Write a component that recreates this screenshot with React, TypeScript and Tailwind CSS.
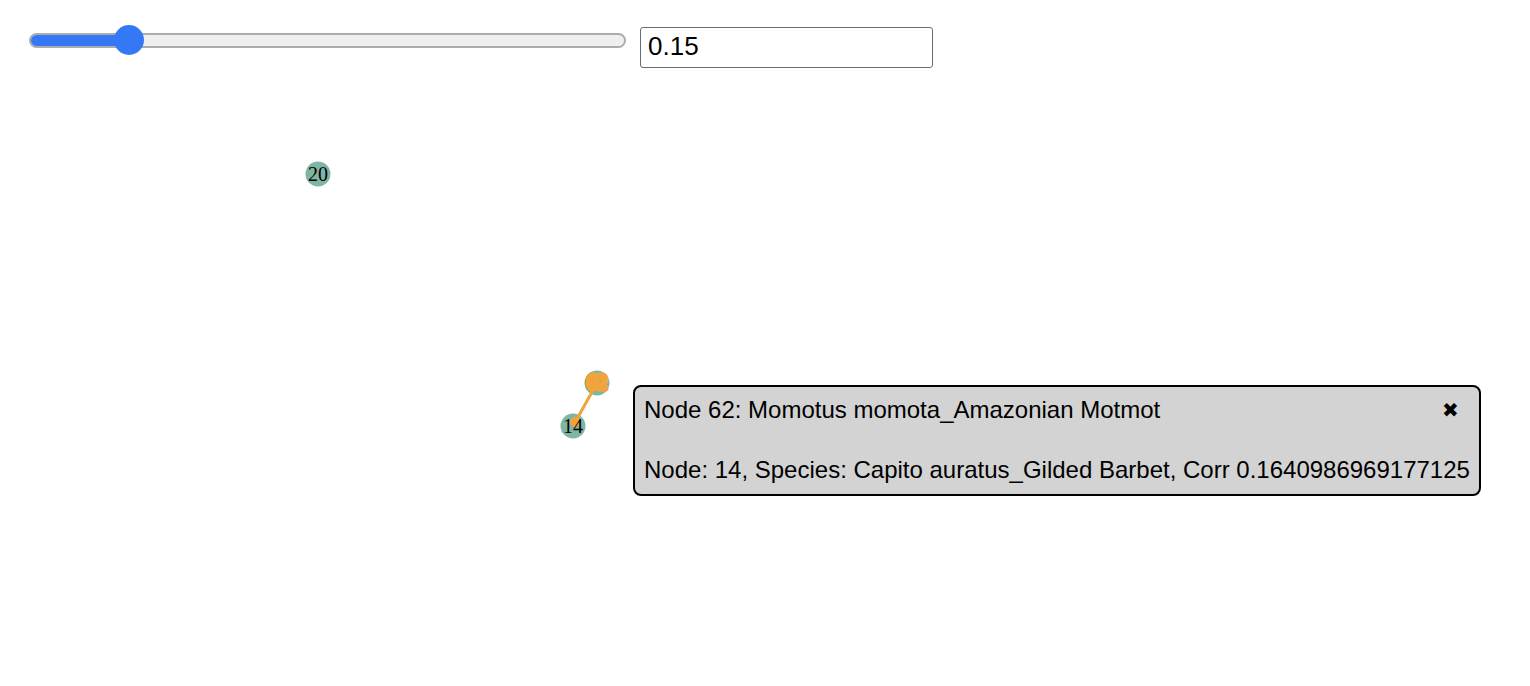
import { useState } from "react";

type GraphNode = { id: number; x: number; y: number; highlight?: boolean };

const nodes: GraphNode[] = [
  { id: 20, x: 318, y: 94 },
  { id: 62, x: 597, y: 303, highlight: true },
  { id: 14, x: 573, y: 346 },
];

export default function App() {
  const [threshold, setThreshold] = useState(0.15);
  const [showInfo, setShowInfo] = useState(true);

  // thumb travel: 15px inset each side of the 597px track
  const thumbLeft = 15 + threshold * (597 - 30);

  return (
    <div className="relative min-h-screen bg-white font-['Liberation_Sans',Arial,sans-serif]">
      {/* Controls */}
      <div className="flex items-start gap-[14px] pl-[29px] pt-[27px]">
        <div className="relative -mt-[2px] flex h-[30px] w-[597px] items-center">
          <div className="h-[15px] w-full overflow-hidden rounded-full border-2 border-[#acacac] bg-[#efefef]">
            <div
              className="h-full bg-[#3478f6]"
              style={{ width: thumbLeft }}
            />
          </div>
          <div
            className="absolute top-0 h-[30px] w-[30px] -translate-x-1/2 rounded-full bg-[#3478f6]"
            style={{ left: thumbLeft }}
          />
        </div>
        <input
          type="text"
          value={threshold}
          onChange={(e) => setThreshold(Number(e.target.value) || 0)}
          className="h-[41px] w-[293px] rounded-[3px] border-[1.5px] border-[#6b6b6b] px-[7px] pb-[3px] text-[26px] text-black outline-none"
        />
      </div>

      {/* Graph */}
      <svg width="1530" height="594" className="mt-[12px] block">
        {nodes.map((n) => (
          <circle key={n.id} cx={n.x} cy={n.y} r="12.5" fill="#7fb5a3" />
        ))}
        <line x1="597" y1="303" x2="573" y2="346" stroke="#f0a43a" strokeWidth="3" />
        <circle cx="575" cy="342" r="5" fill="#f0a43a" />
        {nodes.map((n) =>
          n.highlight ? (
            <text
              key={n.id}
              x={n.x}
              y={n.y + 6}
              textAnchor="middle"
              fontFamily="Liberation Serif, serif"
              fontSize="20"
              fill="#f0a43a"
              stroke="#f0a43a"
              strokeWidth="5"
              strokeLinejoin="round"
            >
              {n.id}
            </text>
          ) : (
            <text
              key={n.id}
              x={n.x}
              y={n.y + 6.5}
              textAnchor="middle"
              fontFamily="Liberation Serif, serif"
              fontSize="20"
              fill="#000"
            >
              {n.id}
            </text>
          )
        )}
      </svg>

      {/* Info popup */}
      {showInfo && (
        <div className="absolute left-[633px] top-[385px] rounded-[8px] border-2 border-black bg-[#d3d3d3] px-[9px] pt-[9px] pb-[6px] text-[24px] text-black">
          <div className="flex h-[28px] items-center justify-between">
            <span>Node 62: Momotus momota_Amazonian Motmot</span>
            <button
              onClick={() => setShowInfo(false)}
              className="mr-[11px] text-[20px] leading-none"
            >
              ✖
            </button>
          </div>
          <p className="mt-[28px]">
            Node: 14, Species: Capito auratus_Gilded Barbet, Corr 0.1640986969177125
          </p>
        </div>
      )}
    </div>
  );
}
